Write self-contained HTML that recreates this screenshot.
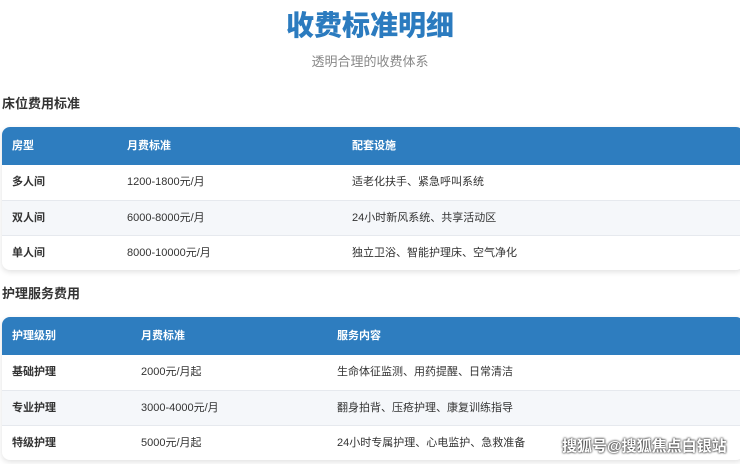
<!DOCTYPE html>
<html><head><meta charset="utf-8"><style>
*{margin:0;padding:0;box-sizing:border-box}
body{width:740px;height:464px;overflow:hidden;background:#fff;font-family:"Liberation Sans","Noto Sans CJK SC",sans-serif;position:relative;color:#333}
h1{position:absolute;top:8px;left:0;width:740px;text-align:center;font-size:28px;color:#2b7bbf;font-weight:900;line-height:36px}
.sub{position:absolute;top:53px;left:0;width:740px;text-align:center;font-size:13px;color:#888;line-height:18px}
.h{position:absolute;left:2px;font-size:13px;font-weight:bold;color:#333;line-height:18px}
.t{position:absolute;left:2px;width:742px;border-radius:8px;overflow:hidden;box-shadow:0 2px 6px rgba(0,0,0,.12);background:#fff}
.r{position:relative;height:35px;font-size:11px;line-height:35px;border-top:1px solid #e6e9ee}
.r span{position:absolute;top:0}
.hd{height:38px;line-height:38px;background:#2e7dbf;color:#fff;font-weight:bold;border:none}
.alt{background:#f5f7fa}
.r span.b{font-weight:bold;color:#333}
.wm{position:absolute;left:562px;top:437px;font-size:15px;color:#fff;font-weight:bold;text-shadow:0 0 2px #333,0 0 2px #333;line-height:20px}
</style></head><body>
<h1>收费标准明细</h1>
<div class="sub">透明合理的收费体系</div>
<div class="h" style="top:95px">床位费用标准</div>
<div class="t" style="top:127px">
<div class="r hd"><span style="left:10px">房型</span><span style="left:125px">月费标准</span><span style="left:350px">配套设施</span></div>
<div class="r" style="border:none"><span class="b" style="left:10px">多人间</span><span style="left:125px">1200-1800元/月</span><span style="left:350px">适老化扶手、紧急呼叫系统</span></div>
<div class="r alt"><span class="b" style="left:10px">双人间</span><span style="left:125px">6000-8000元/月</span><span style="left:350px">24小时新风系统、共享活动区</span></div>
<div class="r"><span class="b" style="left:10px">单人间</span><span style="left:125px">8000-10000元/月</span><span style="left:350px">独立卫浴、智能护理床、空气净化</span></div>
</div>
<div class="h" style="top:285px">护理服务费用</div>
<div class="t" style="top:317px">
<div class="r hd"><span style="left:10px">护理级别</span><span style="left:139px">月费标准</span><span style="left:335px">服务内容</span></div>
<div class="r" style="border:none"><span class="b" style="left:10px">基础护理</span><span style="left:139px">2000元/月起</span><span style="left:335px">生命体征监测、用药提醒、日常清洁</span></div>
<div class="r alt"><span class="b" style="left:10px">专业护理</span><span style="left:139px">3000-4000元/月</span><span style="left:335px">翻身拍背、压疮护理、康复训练指导</span></div>
<div class="r"><span class="b" style="left:10px">特级护理</span><span style="left:139px">5000元/月起</span><span style="left:335px">24小时专属护理、心电监护、急救准备</span></div>
</div>
<div class="wm">搜狐号@搜狐焦点白银站</div>
</body></html>
